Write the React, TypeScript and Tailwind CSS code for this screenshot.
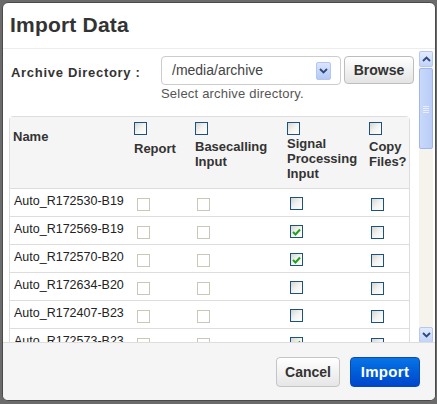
import React from 'react';

const font = { fontFamily: '"Liberation Sans", Arial, sans-serif' };

type Row = { name: string; signal: boolean };

const rows: Row[] = [
  { name: 'Auto_R172530-B19', signal: false },
  { name: 'Auto_R172569-B19', signal: true },
  { name: 'Auto_R172570-B20', signal: true },
  { name: 'Auto_R172634-B20', signal: false },
  { name: 'Auto_R172407-B23', signal: false },
  { name: 'Auto_R172573-B23', signal: true },
];

function Check({ checked, disabled }: { checked?: boolean; disabled?: boolean }) {
  if (disabled) {
    return <div className="w-[13px] h-[13px] border border-[#cbc7b8] bg-white" />;
  }
  return (
    <div className="w-[13px] h-[13px] border border-[#1c5180] bg-gradient-to-br from-[#d6d6d0] via-[#f3f3f1] to-white flex items-center justify-center">
      {checked && (
        <svg width="9" height="8" viewBox="0 0 9 8">
          <path d="M1 4 L3.5 6.5 L8 1.5" stroke="#21a121" strokeWidth="2" fill="none" />
        </svg>
      )}
    </div>
  );
}

function Chevron({ up }: { up?: boolean }) {
  return (
    <svg width="9" height="6" viewBox="0 0 9 6">
      <path
        d={up ? 'M1 5 L4.5 1.5 L8 5' : 'M1 1 L4.5 4.5 L8 1'}
        stroke="#2c4a7a"
        strokeWidth="1.8"
        fill="none"
      />
    </svg>
  );
}

function Scrollbar() {
  return (
    <div className="w-[14px] h-full mt-[2px] bg-[#f5f3ec] flex flex-col">
      <div className="h-[16px] border border-[#b5c8f2] rounded-[2px] bg-gradient-to-b from-[#e3ebfd] to-[#c2d3f8] flex items-center justify-center">
        <Chevron up />
      </div>
      <div className="h-[81px] mt-[1px] border border-[#9fb6ea] rounded-[2px] bg-gradient-to-r from-[#c9d8fb] to-[#b9cdf7] flex items-center justify-center">
        <div className="flex flex-col gap-[1px] mt-[2px]">
          <div className="w-[6px] h-px bg-[#e8eefd]" />
          <div className="w-[6px] h-px bg-[#e8eefd]" />
          <div className="w-[6px] h-px bg-[#e8eefd]" />
          <div className="w-[6px] h-px bg-[#e8eefd]" />
        </div>
      </div>
      <div className="flex-1" />
      <div className="h-[16px] mb-[1px] border border-[#b5c8f2] rounded-[2px] bg-gradient-to-b from-[#e3ebfd] to-[#c2d3f8] flex items-center justify-center">
        <Chevron />
      </div>
    </div>
  );
}

export default function App() {
  const cols = 'grid grid-cols-[121px_64px_92px_82px_42px]';

  return (
    <div className="w-[437px] h-[404px] bg-[#6b6b6b] pt-[2px] pl-[2px] overflow-hidden" style={font}>
      <div className="w-[434px] h-[399px] bg-white border border-[#4a4a4a] rounded-[6px] overflow-hidden flex flex-col">
        {/* Header */}
        <div className="h-[46px] shrink-0 border-b border-[#ececec] px-[7px] flex items-center">
          <h3 className="text-[21px] font-bold text-[#333] tracking-[0.2px] pb-[1px]">Import Data</h3>
        </div>

        {/* Body */}
        <div className="h-[293px] shrink-0 flex">
          <div className="w-[416px] overflow-hidden">
            <div className="flex pt-[7px]">
              <label className="w-[158px] pl-[8px] pt-[7px] text-[13px] font-bold text-[#333] tracking-[0.7px]">
                Archive Directory :
              </label>
              <div>
                <div className="flex gap-[3px]">
                  <div className="w-[180px] h-[29px] border border-[#cccccc] rounded-[4px] flex items-center justify-between pl-[10px] pr-[9px]">
                    <span className="text-[14px] text-[#444]">/media/archive</span>
                    <div className="w-[15px] h-[18px] border border-[#b3c6f0] rounded-[2px] bg-gradient-to-b from-[#dbe5fd] to-[#b4c9f6] flex items-center justify-center">
                      <Chevron />
                    </div>
                  </div>
                  <button className="w-[70px] h-[28px] border border-[#bdbdbd] rounded-[4px] bg-gradient-to-b from-white to-[#e4e4e4] text-[14px] font-bold text-[#333]">
                    Browse
                  </button>
                </div>
                <p className="text-[13px] text-[#555] leading-[14px] mt-[2px] tracking-[0.2px]">Select archive directory.</p>
              </div>
            </div>

            {/* Table */}
            <div className="ml-[6px] mt-[15px] w-[401px] border border-[#dddddd] rounded-t-[4px]">
              <div className={`${cols} h-[72px] bg-[#f5f5f5] border-b border-[#dddddd] text-[13px] font-bold text-[#333] leading-[15px]`}>
                <div className="pl-[3px] pt-[12px]">Name</div>
                <div className="pl-[3px] pt-[5px]">
                  <Check />
                  <div className="mt-[6px]">Report</div>
                </div>
                <div className="pl-0 pt-[5px]">
                  <Check />
                  <div className="mt-[4px]">Basecalling<br />Input</div>
                </div>
                <div className="pl-0 pt-[5px]">
                  <Check />
                  <div className="mt-[1px]">Signal<br />Processing<br />Input</div>
                </div>
                <div className="pl-0 pt-[5px]">
                  <Check />
                  <div className="mt-[4px]">Copy<br />Files?</div>
                </div>
              </div>
              {rows.map((r) => (
                <div key={r.name} className={`${cols} h-[28px] border-b border-[#dddddd] text-[12.5px] text-[#222]`}>
                  <div className="pl-[4px] pt-[3px]">{r.name}</div>
                  <div className="pl-[6px] pt-[9px]">
                    <Check disabled />
                  </div>
                  <div className="pl-[2px] pt-[9px]">
                    <Check disabled />
                  </div>
                  <div className="pl-[3px] pt-[8px]">
                    <Check checked={r.signal} />
                  </div>
                  <div className="pl-[2px] pt-[9px]">
                    <Check />
                  </div>
                </div>
              ))}
            </div>
          </div>
          <Scrollbar />
        </div>

        {/* Footer */}
        <div className="flex-1 bg-[#f5f5f5] border-t border-[#dddddd] flex justify-end items-start pt-[14px] pr-[15px] gap-[10px]">
          <button className="w-[64px] h-[30px] border border-[#c4c4c4] rounded-[4px] bg-gradient-to-b from-white to-[#e6e6e6] text-[14px] font-bold text-[#333]">
            Cancel
          </button>
          <button className="w-[70px] h-[30px] border border-[#0a4bb3] rounded-[4px] bg-gradient-to-b from-[#0a74e6] to-[#0046cc] text-[15px] font-bold text-white tracking-[0.3px]">
            Import
          </button>
        </div>
      </div>
    </div>
  );
}
